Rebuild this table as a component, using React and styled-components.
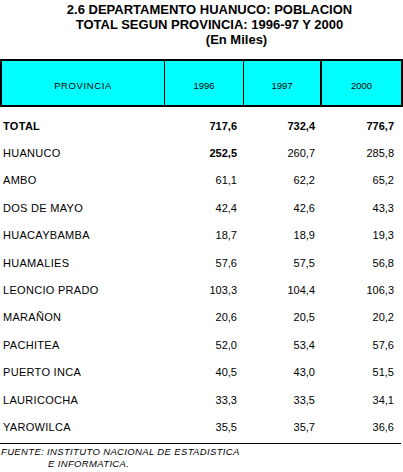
import React from "react";
import styled, { createGlobalStyle } from "styled-components";

const rows = [
  { name: "TOTAL", v: ["717,6", "732,4", "776,7"], bold: [true, true, true], strong: true },
  { name: "HUANUCO", v: ["252,5", "260,7", "285,8"], bold: [true, false, false] },
  { name: "AMBO", v: ["61,1", "62,2", "65,2"] },
  { name: "DOS DE MAYO", v: ["42,4", "42,6", "43,3"] },
  { name: "HUACAYBAMBA", v: ["18,7", "18,9", "19,3"] },
  { name: "HUAMALIES", v: ["57,6", "57,5", "56,8"] },
  { name: "LEONCIO PRADO", v: ["103,3", "104,4", "106,3"] },
  { name: "MARAÑON", v: ["20,6", "20,5", "20,2"] },
  { name: "PACHITEA", v: ["52,0", "53,4", "57,6"] },
  { name: "PUERTO INCA", v: ["40,5", "43,0", "51,5"] },
  { name: "LAURICOCHA", v: ["33,3", "33,5", "34,1"] },
  { name: "YAROWILCA", v: ["35,5", "35,7", "36,6"] },
];

const App = () => {
  return (
    <>
      <GlobalStyle />
      <Page>
        <Title>
          <TitleLine>2.6 DEPARTAMENTO HUANUCO: POBLACION</TitleLine>
          <TitleLine>TOTAL SEGUN PROVINCIA: 1996-97 Y 2000</TitleLine>
          <TitleLine shift={54}>(En Miles)</TitleLine>
        </Title>
        <HeadBox>
          <HeadCell spaced>PROVINCIA</HeadCell>
          <HeadCell>1996</HeadCell>
          <HeadCell>1997</HeadCell>
          <HeadCell thick>2000</HeadCell>
        </HeadBox>
        <Body>
          {rows.map(row => (
            <Row key={row.name}>
              <Label strong={row.strong}>{row.name}</Label>
              {row.v.map((val, i) => (
                <Num key={i} strong={row.bold && row.bold[i]}>
                  {val}
                </Num>
              ))}
            </Row>
          ))}
        </Body>
        <Footer>
          <FootLine>FUENTE: INSTITUTO NACIONAL DE ESTADISTICA</FootLine>
          <FootLine indent>E INFORMATICA.</FootLine>
        </Footer>
      </Page>
    </>
  );
};

const GlobalStyle = createGlobalStyle`
  body {
    margin: 0;
    background: #ffffff;
    font-family: "Liberation Sans", Arial, sans-serif;
    color: #000000;
  }
`;

const Page = styled.div`
  width: 403px;
  height: 472px;
  overflow: hidden;
`;

const Title = styled.div`
  padding-top: 2px;
  height: 59px;
  box-sizing: border-box;
  font-weight: bold;
  font-size: 13px;
  line-height: 15px;
  padding-left: 16px;
`;

const TitleLine = styled.div`
  text-align: center;
  padding-left: ${props => props.shift || 0}px;
`;

const HeadBox = styled.div`
  display: grid;
  grid-template-columns: 163px 79px 78px 79px;
  height: 48px;
  box-sizing: border-box;
  border: 2px solid #000;
  background: #00ffff;
`;

const HeadCell = styled.div`
  display: flex;
  align-items: center;
  justify-content: center;
  font-size: 9.5px;
  letter-spacing: ${props => (props.spaced ? "0.6px" : "0")};
  border-right: ${props => (props.thick ? "0" : "1px solid #000")};
  padding-top: 5px;
  box-sizing: border-box;
  &:nth-child(3) {
    border-right: 2px solid #000;
  }
`;

const Body = styled.div`
  padding-top: 5px;
  padding-bottom: 2px;
  border-bottom: 1px solid #000;
  width: 401px;
`;

const Row = styled.div`
  display: grid;
  grid-template-columns: 165px 79px 78px 79px;
  height: 27.4px;
  align-items: center;
  font-size: 11px;
`;

const Label = styled.div`
  padding-left: 3px;
  letter-spacing: 0.3px;
  font-weight: ${props => (props.strong ? "bold" : "normal")};
`;

const Num = styled.div`
  text-align: right;
  padding-right: 7px;
  font-weight: ${props => (props.strong ? "bold" : "normal")};
`;

const Footer = styled.div`
  padding-top: 2px;
  font-size: 9.5px;
  font-style: italic;
  letter-spacing: 0.35px;
  line-height: 12px;
`;

const FootLine = styled.div`
  padding-left: ${props => (props.indent ? "48px" : "1px")};
`;

export default App;
